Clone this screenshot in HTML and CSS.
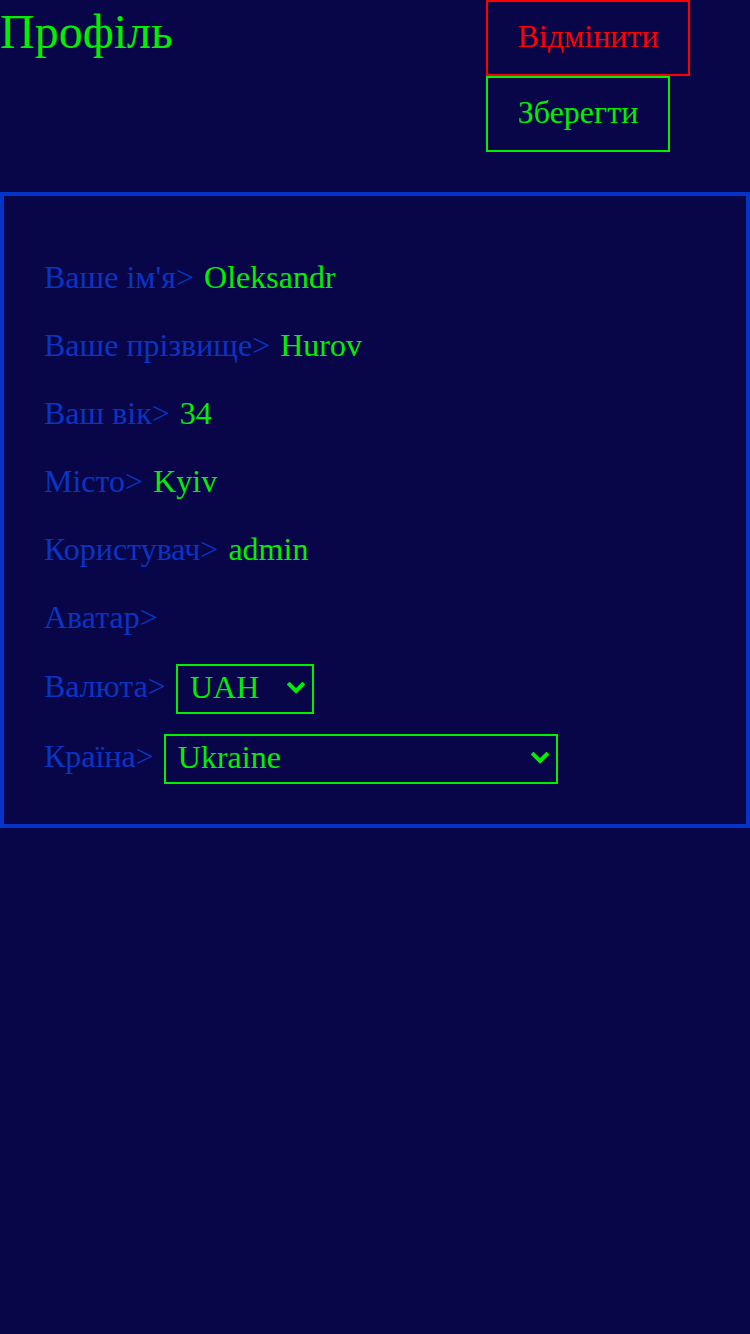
FILE: index.html
```html
<!DOCTYPE html>
<html lang="uk">
<head>
<meta charset="utf-8">
<title>Профіль</title>
<link rel="stylesheet" href="styles.css">
</head>
<body>
<header class="top">
  <h1 class="title">Профіль</h1>
  <div class="actions">
    <button class="btn btn-cancel" type="button">Відмінити</button>
    <button class="btn btn-save" type="button">Зберегти</button>
  </div>
</header>
<section class="panel">
  <div class="row"><span class="label">Ваше ім'я&gt;</span><span class="value">Oleksandr</span></div>
  <div class="row"><span class="label">Ваше прізвище&gt;</span><span class="value">Hurov</span></div>
  <div class="row"><span class="label">Ваш вік&gt;</span><span class="value">34</span></div>
  <div class="row"><span class="label">Місто&gt;</span><span class="value">Kyiv</span></div>
  <div class="row"><span class="label">Користувач&gt;</span><span class="value">admin</span></div>
  <div class="row"><span class="label">Аватар&gt;</span></div>
  <div class="row row-select row-currency"><span class="label">Валюта&gt;</span><span class="select-wrap"><select class="select select-currency"><option>UAH</option><option>USD</option><option>EUR</option></select><svg class="chev" width="18" height="12" viewBox="0 0 18 12"><path d="M2.5 2.5 L9 9 L15.5 2.5" fill="none" stroke="#00f000" stroke-width="4" stroke-linecap="square" stroke-linejoin="miter"/></svg></span></div>
  <div class="row row-select row-country"><span class="label">Країна&gt;</span><span class="select-wrap"><select class="select select-country"><option>Ukraine</option><option>Poland</option></select><svg class="chev" width="18" height="12" viewBox="0 0 18 12"><path d="M2.5 2.5 L9 9 L15.5 2.5" fill="none" stroke="#00f000" stroke-width="4" stroke-linecap="square" stroke-linejoin="miter"/></svg></span></div>
</section>
</body>
</html>
```
FILE: styles.css
```css
html, body {
  margin: 0;
  padding: 0;
  background: #080648;
  min-height: 100%;
}
body {
  font-family: "Liberation Serif", "Times New Roman", serif;
  color: #00f000;
}
.top {
  display: flex;
  justify-content: space-between;
  align-items: flex-start;
}
.title {
  margin: 0;
  font-size: 48px;
  font-weight: normal;
  color: #00f000;
  line-height: 63px;
}
.actions {
  display: flex;
  flex-direction: column;
  align-items: flex-start;
  margin-right: 60px;
}
.btn {
  font-family: "Liberation Serif", "Times New Roman", serif;
  font-size: 32px;
  line-height: 36px;
  padding: 16px 0 20px;
  text-align: center;
  box-sizing: border-box;
  background: transparent;
  border: 2px solid;
  margin: 0;
  border-radius: 0;
}
.btn-cancel {
  width: 204px;
  color: #ff0000;
  border-color: #ff0000;
}
.btn-save {
  width: 184px;
  color: #00f000;
  border-color: #00f000;
}
.panel {
  margin-top: 40px;
  border: 4px solid #0433c8;
  padding: 63px 40px 40px;
  display: flex;
  flex-direction: column;
}
.row {
  display: flex;
  align-items: baseline;
  gap: 10px;
  font-size: 32px;
  line-height: 36px;
  margin-top: 32px;
}
.row:first-child {
  margin-top: 0;
}
.row-select {
  align-items: flex-start;
}
.row-select .label {
  margin-top: 4px;
}
.row-currency {
  margin-top: 29px;
}
.row-country {
  margin-top: 20px;
}
.label {
  color: #0a34c4;
}
.value {
  color: #00f000;
}
.select-wrap {
  position: relative;
  display: inline-block;
}
.select {
  display: block;
  appearance: none;
  -webkit-appearance: none;
  background: transparent;
  color: #00f000;
  border: 2px solid #00f000;
  border-radius: 0;
  font-family: "Liberation Serif", "Times New Roman", serif;
  font-size: 32px;
  height: 50px;
  box-sizing: border-box;
  padding: 0 12px 4px;
  margin: 0;
}
.select-currency {
  width: 138px;
}
.select-country {
  width: 394px;
}
.chev {
  position: absolute;
  right: 9px;
  top: 18px;
  pointer-events: none;
}
```
